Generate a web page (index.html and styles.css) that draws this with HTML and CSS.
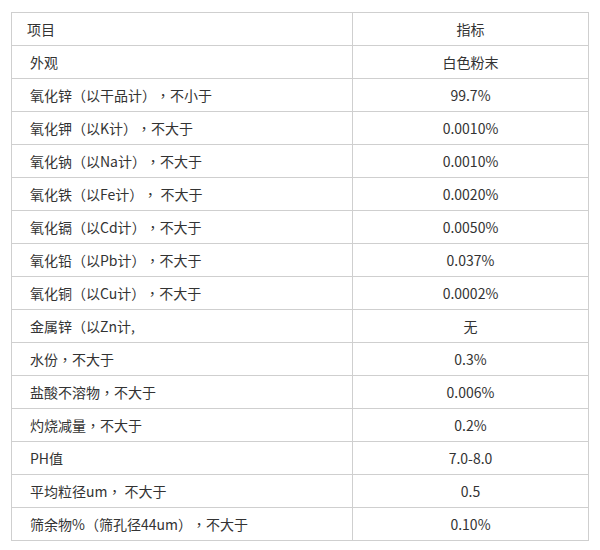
FILE: index.html
```html
<!DOCTYPE html>
<html lang="zh-CN">
<head>
<meta charset="utf-8">
<link rel="stylesheet" href="styles.css">
</head>
<body>
<div class="wrap">
<table class="spec">
<colgroup><col class="c1"><col class="c2"></colgroup>
<tr class="head"><td class="name">项目</td><td class="val">指标</td></tr>
<tr><td class="name">外观</td><td class="val">白色粉末</td></tr>
<tr><td class="name">氧化锌<span class="pu" lang="zh-TW">（</span>以干品计<span class="pu" lang="zh-TW">）</span><span class="pu" lang="zh-TW">，</span>不小于</td><td class="val">99.7%</td></tr>
<tr><td class="name">氧化钾<span class="pu" lang="zh-TW">（</span>以K计<span class="pu" lang="zh-TW">）</span><span class="pu" lang="zh-TW">，</span>不大于</td><td class="val">0.0010%</td></tr>
<tr><td class="name">氧化钠<span class="pu" lang="zh-TW">（</span>以Na计<span class="pu" lang="zh-TW">）</span><span class="pu" lang="zh-TW">，</span>不大于</td><td class="val">0.0010%</td></tr>
<tr><td class="name">氧化铁<span class="pu" lang="zh-TW">（</span>以Fe计<span class="pu" lang="zh-TW">）</span><span class="pu" lang="zh-TW">，</span> 不大于</td><td class="val">0.0020%</td></tr>
<tr><td class="name">氧化镉<span class="pu" lang="zh-TW">（</span>以Cd计<span class="pu" lang="zh-TW">）</span><span class="pu" lang="zh-TW">，</span>不大于</td><td class="val">0.0050%</td></tr>
<tr><td class="name">氧化铅<span class="pu" lang="zh-TW">（</span>以Pb计<span class="pu" lang="zh-TW">）</span><span class="pu" lang="zh-TW">，</span>不大于</td><td class="val">0.037%</td></tr>
<tr><td class="name">氧化铜<span class="pu" lang="zh-TW">（</span>以Cu计<span class="pu" lang="zh-TW">）</span><span class="pu" lang="zh-TW">，</span>不大于</td><td class="val">0.0002%</td></tr>
<tr><td class="name">金属锌<span class="pu" lang="zh-TW">（</span>以Zn计,</td><td class="val">无</td></tr>
<tr><td class="name">水份<span class="pu" lang="zh-TW">，</span>不大于</td><td class="val">0.3%</td></tr>
<tr><td class="name">盐酸不溶物<span class="pu" lang="zh-TW">，</span>不大于</td><td class="val">0.006%</td></tr>
<tr><td class="name">灼烧减量<span class="pu" lang="zh-TW">，</span>不大于</td><td class="val">0.2%</td></tr>
<tr><td class="name">PH值</td><td class="val">7.0-8.0</td></tr>
<tr><td class="name">平均粒径um<span class="pu" lang="zh-TW">，</span> 不大于</td><td class="val">0.5</td></tr>
<tr><td class="name">筛余物%<span class="pu" lang="zh-TW">（</span>筛孔径44um<span class="pu" lang="zh-TW">）</span><span class="pu" lang="zh-TW">，</span>不大于</td><td class="val">0.10%</td></tr>
</table>
</div>
</body>
</html>
```
FILE: styles.css
```css
html, body {
  margin: 0;
  padding: 0;
  background: #fff;
}
.wrap {
  padding: 12px 0 0 11px;
}
.spec {
  border-collapse: collapse;
  width: 577px;
  table-layout: fixed;
  font-family: "Noto Sans CJK SC", "Liberation Sans", sans-serif;
  font-size: 14px;
  color: #333;
  text-spacing-trim: space-all;
}
.c1 { width: 341px; }
.c2 { width: 236px; }
.spec td {
  border: 1px solid #cfcfcf;
  height: 32px;
  padding: 0;
  vertical-align: middle;
  line-height: 16px;
  white-space: nowrap;
}
.spec td.name {
  padding-left: 18px;
  text-align: left;
}
.spec tr.head td.name {
  padding-left: 15px;
}
.spec td.val {
  text-align: center;
}
.pu {
  font-family: "Noto Sans CJK TC", sans-serif;
}
```
